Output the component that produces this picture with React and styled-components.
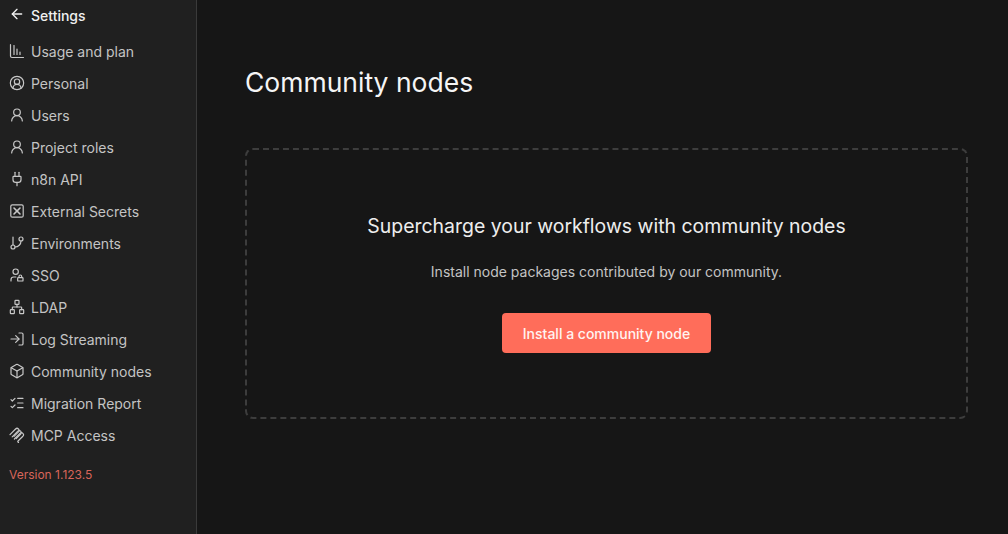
import React from "react";
import styled, { createGlobalStyle } from "styled-components";
import {
  ArrowLeft,
  Box,
  CircleUserRound,
  GitBranch,
  ListChecks,
  LogIn,
  Network,
  Plug,
  UserLock,
  UserRound,
} from "lucide-react";

const GlobalStyle = createGlobalStyle`
  html, body {
    margin: 0;
    padding: 0;
    height: 100%;
    background: #161616;
  }
  body {
    font-family: Inter, "Liberation Sans", sans-serif;
    overflow: hidden;
  }
`;

const Page = styled.div`
  display: flex;
  width: 1008px;
  height: 534px;
  background: #161616;
`;

const Sidebar = styled.nav`
  display: flex;
  flex-direction: column;
  box-sizing: border-box;
  width: 197px;
  flex-shrink: 0;
  background: #202020;
  border-right: 1px solid #3a3a3a;
`;

const Header = styled.div`
  display: flex;
  align-items: center;
  gap: 6px;
  height: 30px;
  padding-left: 9px;
  color: #f0f0f0;
  font-size: 14px;
  font-weight: 500;
  svg {
    margin-top: -3px;
  }
`;

const Menu = styled.div`
  display: flex;
  flex-direction: column;
  padding-top: 5px;
`;

const MenuItem = styled.div`
  display: flex;
  align-items: center;
  gap: 6px;
  height: 32px;
  padding-left: 9px;
  color: #c4c4c4;
  font-size: 14px;
  svg {
    flex-shrink: 0;
    color: #c8c8c8;
  }
`;

const Version = styled.div`
  padding: 16px 0 0 9px;
  color: #d8655a;
  font-size: 12px;
  line-height: 16px;
`;

const Main = styled.main`
  flex: 1;
  display: flex;
  flex-direction: column;
  padding: 64px 40px 0 48px;
`;

const Title = styled.h1`
  margin: 0;
  color: #f5f5f5;
  font-size: 26.5px;
  font-weight: 400;
  line-height: 36px;
`;

const Callout = styled.section`
  display: flex;
  flex-direction: column;
  align-items: center;
  box-sizing: border-box;
  height: 271px;
  margin-top: 48px;
  padding-top: 63px;
  border: 2px dashed #3d3d3d;
  border-radius: 8px;
`;

const Heading = styled.h2`
  margin: 0;
  color: #ededed;
  font-size: 19.45px;
  font-weight: 400;
  line-height: 26px;
`;

const Description = styled.p`
  margin: 24px 0 0;
  color: #c4c4c4;
  font-size: 14px;
  line-height: 18px;
`;

const InstallButton = styled.button`
  height: 40px;
  margin-top: 32px;
  padding: 0 21px;
  border: none;
  border-radius: 4px;
  background: #ff6d5a;
  color: #fff3f0;
  font-family: inherit;
  font-size: 14px;
  font-weight: 500;
`;

const SmallIcon = ({ size, children }) => (
  <svg width={size} height={size} viewBox="0 0 16 16" fill="none" stroke="currentColor" strokeWidth="1.2" strokeLinecap="round" strokeLinejoin="round">
    {children}
  </svg>
);

const UsageIcon = ({ size }) => (
  <SmallIcon size={size}>
    <path d="M1.5 1.5v11.5a1.5 1.5 0 0 0 1.5 1.5h11.5" />
    <path d="M5 2.5v9" />
    <path d="M8 6v5.5" />
    <path d="M11 9v2.5" />
  </SmallIcon>
);

const SecretsIcon = ({ size }) => (
  <SmallIcon size={size}>
    <rect x="1.8" y="1.8" width="12.4" height="12.4" rx="1.5" />
    <path d="M5 5l6 6" strokeWidth="1.6" />
    <path d="M11 5l-6 6" strokeWidth="1.6" />
  </SmallIcon>
);

const McpIcon = ({ size }) => (
  <SmallIcon size={size}>
    <path d="M1 7.6L6.6 2a2 2 0 0 1 2.9 2.8L5 9.3" />
    <path d="M3.2 9.8L8.8 4.2a2 2 0 0 1 2.9 2.8L7.2 11.5" />
    <path d="M5.4 12L11 6.4a2 2 0 0 1 2.9 2.8L9 14a.7.7 0 0 0 0 1l.5.5" />
  </SmallIcon>
);

const items = [
  ["Usage and plan", UsageIcon],
  ["Personal", CircleUserRound],
  ["Users", UserRound],
  ["Project roles", UserRound],
  ["n8n API", Plug],
  ["External Secrets", SecretsIcon],
  ["Environments", GitBranch],
  ["SSO", UserLock],
  ["LDAP", Network],
  ["Log Streaming", LogIn],
  ["Community nodes", Box],
  ["Migration Report", ListChecks],
  ["MCP Access", McpIcon],
];

function App() {
  return (
    <Page>
      <GlobalStyle />
      <Sidebar>
        <Header>
          <ArrowLeft size={16} />
          Settings
        </Header>
        <Menu>
          {items.map(([label, Icon]) => (
            <MenuItem key={label}>
              <Icon size={16} strokeWidth={1.8} />
              {label}
            </MenuItem>
          ))}
        </Menu>
        <Version>Version 1.123.5</Version>
      </Sidebar>
      <Main>
        <Title>Community nodes</Title>
        <Callout>
          <Heading>Supercharge your workflows with community nodes</Heading>
          <Description>Install node packages contributed by our community.</Description>
          <InstallButton>Install a community node</InstallButton>
        </Callout>
      </Main>
    </Page>
  );
}

export default App;
